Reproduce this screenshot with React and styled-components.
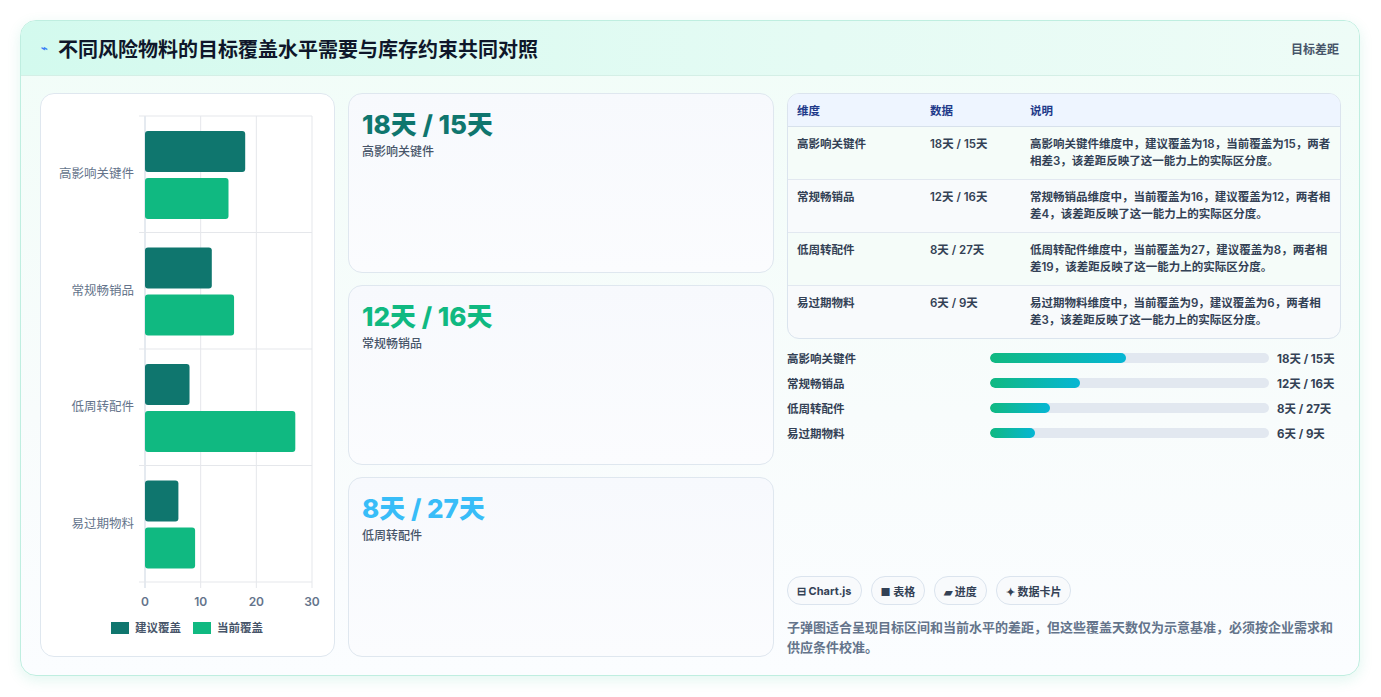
import React from "react";
import styled, { createGlobalStyle } from "styled-components";

const Global = createGlobalStyle`
  body { margin: 0; background: #fff; font-family: Inter, "Noto Sans CJK SC", sans-serif; }
`;
const Page = styled.div`padding: 20px 21px 21px 20px;`;
const Card = styled.div`
  border: 1px solid #bfeee0; border-radius: 16px; overflow: hidden;
  background: linear-gradient(180deg, #f1fdf8 0%, #f8fcfc 60%, #fbfdff 100%);
  box-shadow: 0 4px 14px rgba(16,185,129,0.12);
`;
const Header = styled.div`
  height: 54px; display: flex; align-items: center; justify-content: space-between;
  padding: 0 20px; background: linear-gradient(90deg, #d3faee, #e5fbf4 60%, #eefcf7);
  border-bottom: 1px solid #d4efe6;
`;
const Title = styled.h1`
  margin: 0; font-size: 20px; font-weight: 700; color: #0f172a; display: flex; align-items: center; gap: 10px;
`;
const HeadTag = styled.span`font-size: 12px; color: #475569; font-weight: 600;`;
const Body = styled.div`
  display: grid; grid-template-columns: 295px 426px 1fr; gap: 13px; padding: 17px 18px 18px 19px; height: 564px;
`;
const Panel = styled.div`
  background: ${p => p.$bg || "#fff"}; border: 1px solid #dfe7ef; border-radius: 14px; position: relative;
`;
const Cards = styled.div`display: grid; grid-template-rows: repeat(3, 1fr); gap: 12px;`;
const Value = styled.div`font-size: 26px; font-weight: 800; color: ${p => p.$c}; margin: 10px 0 0 13px;`;
const Sub = styled.div`font-size: 12px; color: #475569; font-weight: 500; margin: 1px 0 0 13px;`;
const Right = styled.div`display: flex; flex-direction: column;`;
const Table = styled.table`
  width: 100%; border-collapse: separate; border-spacing: 0; border: 1px solid #dbe4ee; border-radius: 12px; overflow: hidden;
  font-size: 11.5px; font-weight: 600; color: #334155; background: #f8fafc;
  th { background: #eef5ff; color: #1e3a8a; text-align: left; height: 32px; padding: 0 9px; border-bottom: 1px solid #d7e1ec; font-weight: 700; }
  td { vertical-align: top; padding: 9px 9px 8px; line-height: 17px; height: 35px; border-bottom: 1px solid #e2e8f0; }
  tr:last-child td { border-bottom: none; }
  tbody tr:nth-child(odd) td { background: #f5fcf9; }
`;
const Progress = styled.div`display: flex; flex-direction: column; gap: 8px; margin-top: 10px;`;
const PRow = styled.div`display: grid; grid-template-columns: 195px 279px 1fr; gap: 8px; align-items: center; font-size: 11.5px; font-weight: 700; color: #334155; height: 17px; white-space: nowrap;`;
const Track = styled.div`height: 10px; background: #e2e8f0; border-radius: 6px; overflow: hidden;`;
const Fill = styled.div`height: 100%; border-radius: 6px; background: linear-gradient(90deg, #10b981, #06b6d4);`;
const Chips = styled.div`display: flex; gap: 9px; margin-top: auto;`;
const Chip = styled.span`
  height: 27px; padding: 0 9px; border: 1px solid #dbe4ee; border-radius: 14px; background: #f8fafc;
  display: inline-flex; align-items: center; gap: 4px; font-size: 11px; font-weight: 700; color: #334155;
`;
const Note = styled.p`margin: 12px 0 0; font-size: 13px; line-height: 20px; font-weight: 600; color: #64748b;`;

const cats = [["高影响关键件", 18, 15], ["常规畅销品", 12, 16], ["低周转配件", 8, 27], ["易过期物料", 6, 9]];

function Chart() {
  const x0 = 104, w = 167, y0 = 22, ch = 116.5, sc = w / 30;
  return (
    <svg width="293" height="562" style={{ display: "block" }}>
      {[0, 10, 20, 30].map((v, i) => (
        <g key={i}>
          <line x1={x0 + v * sc} x2={x0 + v * sc} y1={y0} y2={y0 + ch * 4 + 6} stroke={i === 0 ? "#cbd5e1" : "#e5e7eb"} />
          <text x={x0 + v * sc} y={512} textAnchor="middle" fontSize="12" fill="#64748b" fontWeight="600">{v}</text>
        </g>
      ))}
      {[0, 1, 2, 3, 4].map(i => <line key={i} x1={x0 - 6} x2={x0 + w} y1={y0 + i * ch} y2={y0 + i * ch} stroke="#e5e7eb" />)}
      {cats.map(([n, a, b], i) => (
        <g key={n}>
          <text x={x0 - 11} y={y0 + i * ch + 62} textAnchor="end" fontSize="12.5" fill="#64748b">{n}</text>
          <rect x={x0} y={y0 + i * ch + 15} width={a * sc} height={41} rx="3" fill="#0f766e" />
          <rect x={x0} y={y0 + i * ch + 62} width={b * sc} height={41} rx="3" fill="#10b981" />
        </g>
      ))}
      <rect x="70" y="528" width="18" height="12" fill="#0f766e" />
      <text x="94" y="538" fontSize="11.5" fill="#475569" fontWeight="600">建议覆盖</text>
      <rect x="152" y="528" width="18" height="12" fill="#10b981" />
      <text x="176" y="538" fontSize="11.5" fill="#475569" fontWeight="600">当前覆盖</text>
    </svg>
  );
}

const rows = [
  ["高影响关键件", "18天 / 15天", "高影响关键件维度中，建议覆盖为18，当前覆盖为15，两者相差3，该差距反映了这一能力上的实际区分度。", 48.7],
  ["常规畅销品", "12天 / 16天", "常规畅销品维度中，当前覆盖为16，建议覆盖为12，两者相差4，该差距反映了这一能力上的实际区分度。", 32.3],
  ["低周转配件", "8天 / 27天", "低周转配件维度中，当前覆盖为27，建议覆盖为8，两者相差19，该差距反映了这一能力上的实际区分度。", 21.5],
  ["易过期物料", "6天 / 9天", "易过期物料维度中，当前覆盖为9，建议覆盖为6，两者相差3，该差距反映了这一能力上的实际区分度。", 16.1],
];

export default function App() {
  return (
    <Page>
      <Global />
      <Card>
        <Header>
          <Title><span style={{ color: "#3b82f6", fontSize: 11 }}>⌁</span>不同风险物料的目标覆盖水平需要与库存约束共同对照</Title>
          <HeadTag>目标差距</HeadTag>
        </Header>
        <Body>
          <Panel><Chart /></Panel>
          <Cards>
            {[["18天 / 15天", "高影响关键件", "#0f766e"], ["12天 / 16天", "常规畅销品", "#10b981"], ["8天 / 27天", "低周转配件", "#38bdf8"]].map(([v, s, c]) => (
              <Panel key={s} $bg="linear-gradient(180deg,#f7f9fd,#fbfcfe)">
                <Value $c={c}>{v}</Value>
                <Sub>{s}</Sub>
              </Panel>
            ))}
          </Cards>
          <Right>
            <Table>
              <colgroup><col style={{ width: 133 }} /><col style={{ width: 100 }} /><col /></colgroup>
              <thead><tr><th>维度</th><th>数据</th><th>说明</th></tr></thead>
              <tbody>
                {rows.map(r => <tr key={r[0]}><td>{r[0]}</td><td>{r[1]}</td><td>{r[2]}</td></tr>)}
              </tbody>
            </Table>
            <Progress>
              {rows.map(r => (
                <PRow key={r[0]}>
                  <span>{r[0]}</span>
                  <Track><Fill style={{ width: r[3] + "%" }} /></Track>
                  <span>{r[1]}</span>
                </PRow>
              ))}
            </Progress>
            <Chips>
              <Chip>⊟ Chart.js</Chip><Chip>■ 表格</Chip><Chip>▰ 进度</Chip><Chip>✦ 数据卡片</Chip>
            </Chips>
            <Note>子弹图适合呈现目标区间和当前水平的差距，但这些覆盖天数仅为示意基准，必须按企业需求和供应条件校准。</Note>
          </Right>
        </Body>
      </Card>
    </Page>
  );
}
